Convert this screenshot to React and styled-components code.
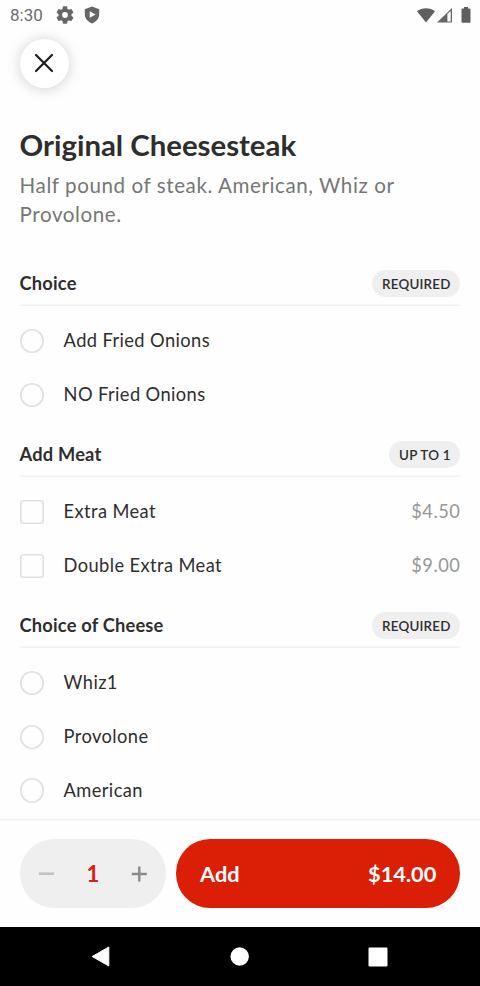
import React from "react";
import styled, { createGlobalStyle } from "styled-components";

const GlobalStyle = createGlobalStyle`
  *, *::before, *::after { box-sizing: border-box; }
  body { margin: 0; background: #fefefe; font-family: Lato, "Open Sans", sans-serif; }
  button { border: 0; padding: 0; margin: 0; font: inherit; background: none; }
`;

const Screen = styled.div`
  width: 480px;
  height: 986px;
  display: flex;
  flex-direction: column;
  overflow: hidden;
  background: #fefefe;
  color: #2e2e2e;
`;

const StatusBar = styled.header`
  flex: none;
  height: 30px;
  padding: 0 9.5px 0 10px;
  display: flex;
  align-items: center;
  color: #6c6c6c;
  svg { display: block; }
`;

const Clock = styled.span`
  width: 46px;
  font: 400 17px/30px Roboto, sans-serif;
  letter-spacing: 0;
`;

const StatusGroup = styled.div`
  display: flex;
  align-items: center;
  gap: ${(p) => p.$gap}px;
  margin-left: ${(p) => (p.$end ? "auto" : "0")};
`;

const BatterySlot = styled.span`
  margin-left: 7px;
`;

const CloseButton = styled.button`
  flex: none;
  width: 49px;
  height: 49px;
  margin: 9px 0 0 19.5px;
  border-radius: 50%;
  display: grid;
  place-items: center;
  background: #fff;
  box-shadow: 0 1px 14px rgba(0, 0, 0, 0.19);
  svg { display: block; margin: -1px 0 0 -1px; }
`;

const Content = styled.main`
  flex: 1;
  min-height: 0;
  overflow: hidden;
  padding: 37px 19.6px 0;
`;

const Title = styled.h1`
  margin: 0;
  font-size: 29.4px;
  line-height: 40px;
  font-weight: 700;
  white-space: nowrap;
  letter-spacing: -0.02px;
`;

const Description = styled.p`
  margin: 5.5px 0 40px;
  font-size: 20.6px;
  line-height: 29.3px;
  letter-spacing: 0.57px;
  color: #767676;
`;

const Section = styled.section`
  height: 171px;
`;

const SectionHeader = styled.div`
  height: 37.4px;
  display: flex;
  align-items: flex-start;
  justify-content: space-between;
  box-shadow: inset 0 -1.5px #f0f0f0;
`;

const SectionTitle = styled.h2`
  margin: 0;
  font-size: 18.3px;
  line-height: 28px;
  font-weight: 700;
  letter-spacing: 0.18px;
`;

const Tag = styled.span`
  height: 27.4px;
  margin-top: 0.8px;
  padding: 0 9.8px;
  border-radius: 14px;
  background: #efefef;
  font-size: 13.4px;
  line-height: 28px;
  font-weight: 600;
  letter-spacing: 0.2px;
`;

const Options = styled.div`
  padding-top: 7.4px;
`;

const Option = styled.label`
  height: 53.8px;
  display: flex;
  align-items: center;
`;

const Control = styled.span`
  flex: none;
  width: 24.4px;
  height: 24.4px;
  margin: 0.6px 19.6px 0 0;
  box-shadow: inset 0 0 0 1.6px #e0e0e0;
  border-radius: ${(p) => (p.$round ? "50%" : "3.5px")};
`;

const OptionLabel = styled.span`
  flex: 1;
  font-size: 18.3px;
  line-height: 26px;
  margin-top: -1.2px;
  letter-spacing: 0.4px;
`;

const Price = styled.span`
  font-size: 18.3px;
  line-height: 26px;
  margin-top: -1.2px;
  letter-spacing: 0.5px;
  color: #979797;
`;

const Footer = styled.footer`
  flex: none;
  height: 108.3px;
  padding: 20.3px 19.6px;
  display: flex;
  gap: 9.8px;
  box-shadow: inset 0 1.5px #f0f0f0;
`;

const Stepper = styled.div`
  width: 146.6px;
  height: 68.4px;
  padding: 0 18.5px;
  border-radius: 34.2px;
  display: flex;
  align-items: center;
  justify-content: space-between;
  background: #efefef;
  svg { display: block; }
`;

const Quantity = styled.span`
  font-size: 22px;
  line-height: 30px;
  font-weight: 700;
  color: #de1a12;
`;

const AddButton = styled.button`
  flex: 1;
  height: 68.4px;
  border-radius: 34.2px;
  && { padding: 0 24px; }
  display: flex;
  align-items: center;
  justify-content: space-between;
  background: #da1f06;
  color: #fff;
  && { font-size: 21.8px; line-height: 30px; font-weight: 700; }
`;

const NavBar = styled.nav`
  flex: none;
  height: 58.7px;
  background: #000;
  padding: 0 92px 0 90.5px;
  display: flex;
  align-items: center;
  justify-content: space-between;
  svg { display: block; }
`;

const GearIcon = () => (
  <svg width="18" height="18" viewBox="2 2 20 20" fill="#666">
    <path d="M19.14 12.94c.04-.3.06-.61.06-.94s-.02-.64-.07-.94l2.03-1.58a.49.49 0 0 0 .12-.61l-1.92-3.32a.49.49 0 0 0-.59-.22l-2.39.96a7 7 0 0 0-1.62-.94l-.36-2.54a.48.48 0 0 0-.48-.41h-3.84a.47.47 0 0 0-.47.41l-.36 2.54c-.59.24-1.13.57-1.62.94l-2.39-.96a.48.48 0 0 0-.59.22L2.74 8.87a.47.47 0 0 0 .12.61l2.03 1.58a7 7 0 0 0 0 1.88l-2.03 1.58a.49.49 0 0 0-.12.61l1.92 3.32c.12.22.37.29.59.22l2.39-.96c.5.38 1.03.7 1.62.94l.36 2.54c.05.24.24.41.48.41h3.84c.24 0 .44-.17.47-.41l.36-2.54a7 7 0 0 0 1.62-.94l2.39.96c.22.08.47 0 .59-.22l1.92-3.32a.47.47 0 0 0-.12-.61zM12 15.2a3.2 3.2 0 1 1 0-6.4 3.2 3.2 0 0 1 0 6.4z" />
  </svg>
);

const ShieldIcon = () => (
  <svg width="16" height="18" viewBox="0 0 16 18">
    <path d="M8 .5 15.200 3.200V8c0 4.300-2.700 7.700-7.200 9.400C3.500 15.700.8 12.300.8 8V3.200z" fill="#666" />
    <path d="M5.700 5.200v6.600L11.600 8.500z" fill="#fefefe" />
  </svg>
);

const WifiIcon = () => (
  <svg width="18" height="15" viewBox="0 0 18 15">
    <path d="M0 3.200C5-.7 13-.7 18 3.200L9 14.500z" fill="#5f5f5f" />
  </svg>
);

const SignalIcon = () => (
  <svg width="15" height="15" viewBox="0 0 15 15">
    <path d="M0 14.500 15 0v14.500z" fill="#666" />
    <path d="M10.400 6 13.700 3v10.500h-3.300z" fill="#fefefe" />
  </svg>
);

const BatteryIcon = () => (
  <svg width="10" height="16" viewBox="0 0 10 16">
    <path d="M3 0h4v1.600h1.700a.8.8 0 0 1 .8.8V15a.8.8 0 0 1-.8.8H1.300a.8.8 0 0 1-.8-.8V2.400a.8.8 0 0 1 .8-.8H3z" fill="#5f5f5f" />
  </svg>
);

const CloseIcon = () => (
  <svg width="20" height="20" viewBox="0 0 20 20">
    <path d="M2 2 18 18M18 2 2 18" stroke="#1c1c1c" strokeWidth="2.200" strokeLinecap="round" />
  </svg>
);

const MinusIcon = () => (
  <svg width="17" height="17" viewBox="0 0 17 17">
    <path d="M1 8.700h15" stroke="#c2c2c2" strokeWidth="2.600" />
  </svg>
);

const PlusIcon = () => (
  <svg width="17" height="17" viewBox="0 0 17 17">
    <path d="M.8 9h15M8.300 1.500v15" stroke="#8a8a8a" strokeWidth="2.400" />
  </svg>
);

const BackIcon = () => (
  <svg width="19" height="21" viewBox="0 0 19 21">
    <path d="M1.200 10.500 17.800 1v19z" fill="#fff" stroke="#fff" strokeWidth="1" strokeLinejoin="round" />
  </svg>
);

const HomeIcon = () => (
  <svg width="21" height="19" viewBox="0 0 21 19">
    <circle cx="11.700" cy="9.500" r="9.200" fill="#fff" />
  </svg>
);

const RecentsIcon = () => (
  <svg width="20" height="20" viewBox="0 0 20 20">
    <rect x="0.500" y="0.500" width="19" height="19" rx="1.200" fill="#fff" />
  </svg>
);

const sections = [
  {
    title: "Choice",
    tag: "REQUIRED",
    single: true,
    options: [{ label: "Add Fried Onions" }, { label: "NO Fried Onions" }],
  },
  {
    title: "Add Meat",
    tag: "UP TO 1",
    single: false,
    options: [
      { label: "Extra Meat", price: "$4.50" },
      { label: "Double Extra Meat", price: "$9.00" },
    ],
  },
  {
    title: "Choice of Cheese",
    tag: "REQUIRED",
    single: true,
    options: [{ label: "Whiz1" }, { label: "Provolone" }, { label: "American" }],
  },
];

export default function App() {
  return (
    <Screen>
      <GlobalStyle />
      <StatusBar>
        <Clock>8:30</Clock>
        <StatusGroup $gap={10}>
          <GearIcon />
          <ShieldIcon />
        </StatusGroup>
        <StatusGroup $gap={2} $end>
          <WifiIcon />
          <SignalIcon />
          <BatterySlot>
            <BatteryIcon />
          </BatterySlot>
        </StatusGroup>
      </StatusBar>
      <CloseButton aria-label="Close">
        <CloseIcon />
      </CloseButton>
      <Content>
        <Title>Original Cheesesteak</Title>
        <Description>Half pound of steak. American, Whiz or Provolone.</Description>
        {sections.map((section) => (
          <Section key={section.title}>
            <SectionHeader>
              <SectionTitle>{section.title}</SectionTitle>
              <Tag>{section.tag}</Tag>
            </SectionHeader>
            <Options>
              {section.options.map((option) => (
                <Option key={option.label}>
                  <Control $round={section.single} />
                  <OptionLabel>{option.label}</OptionLabel>
                  {option.price && <Price>{option.price}</Price>}
                </Option>
              ))}
            </Options>
          </Section>
        ))}
      </Content>
      <Footer>
        <Stepper>
          <MinusIcon />
          <Quantity>1</Quantity>
          <PlusIcon />
        </Stepper>
        <AddButton>
          <span>Add</span>
          <span>$14.00</span>
        </AddButton>
      </Footer>
      <NavBar>
        <BackIcon />
        <HomeIcon />
        <RecentsIcon />
      </NavBar>
    </Screen>
  );
}
